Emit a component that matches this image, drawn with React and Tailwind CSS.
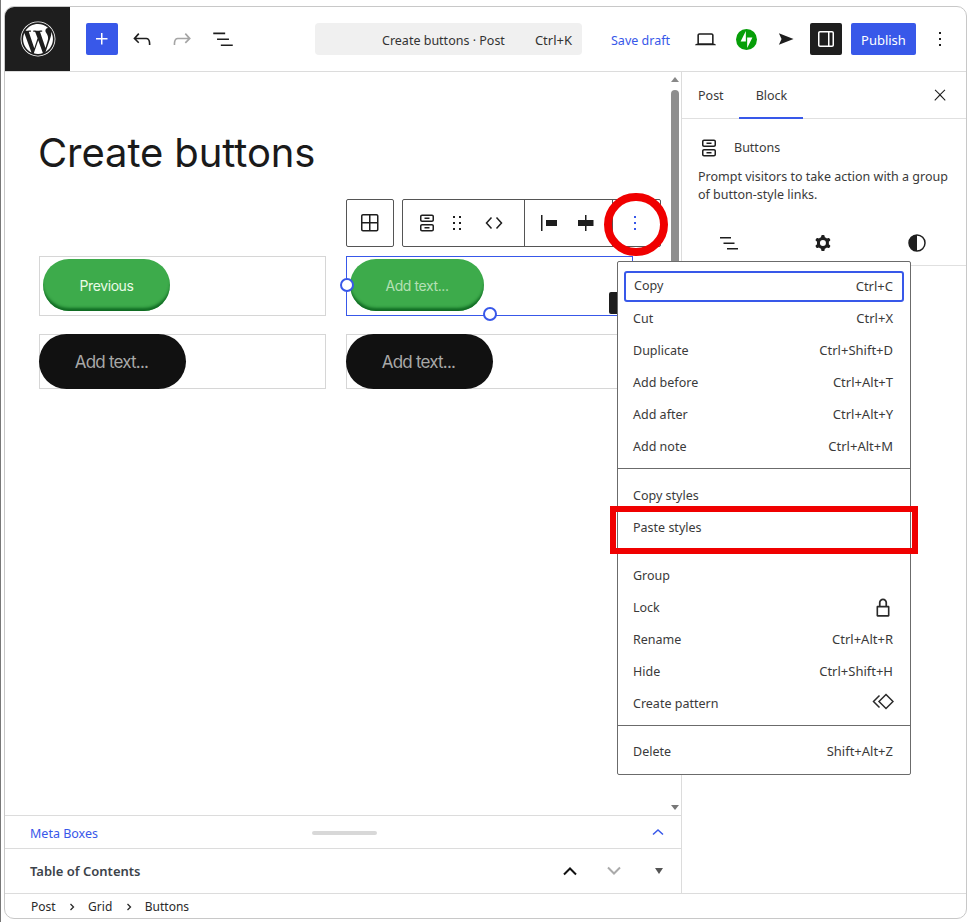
import React from 'react';
import { FaWordpress } from 'react-icons/fa';

const Icon = ({ d, size = 24, className = '', evenOdd = false }) => (
  <svg width={size} height={size} viewBox="0 0 24 24" fill="currentColor" className={`shrink-0 ${className}`}>
    <path d={d} fillRule={evenOdd ? 'evenodd' : 'nonzero'} clipRule={evenOdd ? 'evenodd' : 'nonzero'} />
  </svg>
);

const paths = {
  plus: 'M11 12.5V17.5H12.5V12.5H17.5V11H12.5V6H11V11H6V12.5H11Z',
  undo: 'M18.3 11.7c-.6-.6-1.4-.9-2.3-.9H6.7l2.9-3.3-1.1-1-4.5 5L8.5 16l1-1-2.7-2.7H16c.5 0 .9.2 1.3.5 1 1 1 3.4 1 4.5v.3h1.5v-.2c0-1.5 0-4.3-1.5-5.7z',
  redo: 'M15.6 6.5l-1.1 1 2.9 3.3H8c-.9 0-1.7.3-2.3.9-1.4 1.5-1.4 4.2-1.4 5.6v.2h1.5v-.3c0-1.1 0-3.5 1-4.5.3-.3.7-.5 1.3-.5h9.2L14.5 15l1.1 1.1 4.6-4.6-4.6-5z',
  list: 'M3 6h11v1.5H3V6zm3.5 5.5h11V13h-11v-1.5zM21 17H10v1.5h11V17z',
  laptop: 'M20.5 16h-.7V8c0-1.1-.9-2-2-2H6.2c-1.1 0-2 .9-2 2v8h-.7c-.8 0-1.5.7-1.5 1.5h20c0-.8-.7-1.5-1.5-1.5zM5.7 8c0-.3.2-.5.5-.5h11.6c.3 0 .5.2.5.5v7.6H5.7V8z',
  sidebar: 'M18 4H6c-1.1 0-2 .9-2 2v12c0 1.1.9 2 2 2h12c1.1 0 2-.9 2-2V6c0-1.1-.9-2-2-2zm-4 14.5H6c-.3 0-.5-.2-.5-.5V6c0-.3.2-.5.5-.5h8v13zm4.5-.5c0 .3-.2.5-.5.5h-2.5v-13H18c.3 0 .5.2.5.5v12z',
  dots: 'M13 19h-2v-2h2v2zm0-6h-2v-2h2v2zm0-6h-2V5h2v2z',
  close: 'M13 11.8l6.1-6.3-1-1-6.1 6.2-6.1-6.2-1 1 6.1 6.3-6.5 6.7 1 1 6.5-6.6 6.5 6.6 1-1z',
  buttons: 'M14.5 17.5H9.5V16H14.5V17.5Z M14.5 8H9.5V6.5H14.5V8Z M7 3.5H17C18.1 3.5 19 4.4 19 5.5V9C19 10.1 18.1 11 17 11H7C5.9 11 5 10.1 5 9V5.5C5 4.4 5.9 3.5 7 3.5ZM17 5H7C6.72 5 6.5 5.22 6.5 5.5V9C6.5 9.28 6.72 9.5 7 9.5H17C17.28 9.5 17.5 9.28 17.5 9V5.5C17.5 5.22 17.28 5 17 5Z M7 13H17C18.1 13 19 13.9 19 15V18.5C19 19.6 18.1 20.5 17 20.5H7C5.9 20.5 5 19.6 5 18.5V15C5 13.9 5.9 13 7 13ZM17 14.5H7C6.72 14.5 6.5 14.72 6.5 15V18.5C6.5 18.78 6.72 19 7 19H17C17.28 19 17.5 18.78 17.5 18.5V15C17.5 14.72 17.28 14.5 17 14.5Z',
  drag: 'M8 7h2V5H8v2zm0 6h2v-2H8v2zm0 6h2v-2H8v2zm6-14v2h2V5h-2zm0 8h2v-2h-2v2zm0 6h2v-2h-2v2z',
  grid: 'm3 5c0-1.1.9-2 2-2h13.5c1.1 0 2 .9 2 2v13.5c0 1.1-.9 2-2 2h-13.5c-1.1 0-2-.9-2-2zm2-.5h6v6.5h-6.5v-6c0-.28.22-.5.5-.5zm-.5 8v6c0 .28.22.5.5.5h6v-6.5zm8 0v6.5h6c.28 0 .5-.22.5-.5v-6zm0-8v6.5h6.5v-6c0-.28-.22-.5-.5-.5z',
  justifyLeft: 'M9 9v6h11V9H9zM4 20h1.5V4H4v16z',
  justifyCenter: 'M12.5 15v5H11v-5H4V9h7V4h1.5v5h7v6h-7Z',
  cog: 'M10.289 4.836A1 1 0 0111.275 4h1.306a1 1 0 01.987.836l.244 1.466c.787.26 1.503.679 2.108 1.218l1.393-.522a1 1 0 011.216.437l.653 1.13a1 1 0 01-.23 1.273l-1.148.944a6.025 6.025 0 010 2.435l1.149.946a1 1 0 01.23 1.272l-.653 1.13a1 1 0 01-1.216.437l-1.394-.522c-.605.54-1.32.958-2.108 1.218l-.244 1.466a1 1 0 01-.987.836h-1.306a1 1 0 01-.986-.836l-.244-1.466a5.995 5.995 0 01-2.108-1.218l-1.394.522a1 1 0 01-1.217-.436l-.653-1.131a1 1 0 01.23-1.272l1.149-.946a6.026 6.026 0 010-2.435l-1.148-.944a1 1 0 01-.23-1.272l.653-1.131a1 1 0 011.217-.437l1.393.522a5.994 5.994 0 012.108-1.218l.244-1.466zM14.929 12a3 3 0 11-6 0 3 3 0 016 0z',
  lock: 'M17 10h-1.2V7c0-2.1-1.7-3.8-3.8-3.8-2.1 0-3.8 1.7-3.8 3.8v3H7c-.6 0-1 .4-1 1v8c0 .6.4 1 1 1h10c.6 0 1-.4 1-1v-8c0-.6-.4-1-1-1zM9.8 7c0-1.2 1-2.2 2.2-2.2 1.2 0 2.2 1 2.2 2.2v3H9.8V7zm6.7 11.5h-9v-7h9v7z',
};

const Row = ({ label, hint, icon, className = '' }) => (
  <div className={`flex h-8 items-center justify-between pl-[15px] pr-[17px] ${className}`}>
    <span className="text-[12.5px]">{label}</span>
    {hint && <span>{hint}</span>}
    {icon}
  </div>
);

const Diamonds = () => (
  <svg width="22" height="22" viewBox="0 0 22 22" fill="none" stroke="#2a2a2a" strokeWidth="1.5" className="-mr-[1px] -mt-[4px]">
    <path d="M7.5 4.5 1.5 10.5l6 6" />
    <path d="M14 3.5 21 10.5l-7 7-7-7z" />
  </svg>
);

const Menu = () => (
  <div className="absolute left-[617px] top-[261px] w-[294px] h-[514px] bg-white border border-[#6b6b6b] rounded-[2px] text-[13px] text-[#3a3a3a]">
    <div className="pt-[9px] pl-[6px] pr-[6px]">
      <div className="flex h-[31px] items-center justify-between border-2 border-[#3858e9] rounded-[3px] pl-[8px] pr-[9px]">
        <span className="text-[12.5px]">Copy</span>
        <span>Ctrl+C</span>
      </div>
    </div>
    <div className="mt-[1px]">
      <Row label="Cut" hint="Ctrl+X" />
      <Row label="Duplicate" hint="Ctrl+Shift+D" />
      <Row label="Add before" hint="Ctrl+Alt+T" />
      <Row label="Add after" hint="Ctrl+Alt+Y" />
      <Row label="Add note" hint="Ctrl+Alt+M" />
    </div>
    <div className="mt-[5px] border-t border-[#6b6b6b] pt-[11px]">
      <Row label="Copy styles" />
      <Row label="Paste styles" />
    </div>
    <div className="mt-[6px] border-t border-[#6b6b6b] pt-[9px]">
      <Row label="Group" />
      <Row label="Lock" icon={<Icon d={paths.lock} size={26} className="text-[#2a2a2a] -mr-[3px]" />} />
      <Row label="Rename" hint="Ctrl+Alt+R" />
      <Row label="Hide" hint="Ctrl+Shift+H" />
      <Row label="Create pattern" icon={<Diamonds />} />
    </div>
    <div className="mt-[5px] border-t border-[#6b6b6b] pt-[10px]">
      <Row label="Delete" hint="Shift+Alt+Z" />
    </div>
  </div>
);

const Header = () => (
  <div className="flex h-[65px] shrink-0 items-center border-b border-[#dcdcdc] text-[13px]">
    <div className="flex h-[64px] w-[65px] shrink-0 items-center justify-center bg-[#1e1e1e] rounded-tl-[9px] text-white">
      <FaWordpress size={36} />
    </div>
    <div className="ml-[16px] flex h-8 w-8 items-center justify-center rounded-[2px] bg-[#3858e9] text-white">
      <Icon d={paths.plus} />
    </div>
    <Icon d={paths.undo} className="ml-[11px] text-[#1e1e1e]" size={26} />
    <Icon d={paths.redo} className="ml-[14px] text-[#a5a5a5]" size={26} />
    <Icon d={paths.list} className="ml-[15px] text-[#1e1e1e]" size={26} />
    <div className="ml-[79px] flex h-8 w-[267px] items-center rounded-[4px] bg-[#f0f0f0] pl-[67px] pt-[4px] text-[#333]">
      <span className="whitespace-nowrap text-[12.5px]">Create buttons · Post</span>
      <span className="ml-[30px]">Ctrl+K</span>
    </div>
    <span className="ml-[29px] pt-[4px] text-[12.5px] text-[#3858e9]">Save draft</span>
    <Icon d={paths.laptop} className="ml-[23px] text-[#1e1e1e]" size={25} />
    <svg width="21" height="21" viewBox="0 0 32 32" className="ml-[18px] shrink-0">
      <circle cx="16" cy="16" r="16" fill="#069e08" />
      <path d="M15 19H7l8-16v16zM17 29V13h8l-8 16z" fill="#fff" />
    </svg>
    <svg width="16" height="14" viewBox="0 0 18 14" className="ml-[21px] shrink-0">
      <path d="M1 0.5 17.5 7 1 13.5 4 7z" fill="#1e1e1e" />
    </svg>
    <div className="ml-[16px] flex h-8 w-8 items-center justify-center rounded-[2px] bg-[#1e1e1e] text-white">
      <Icon d={paths.sidebar} />
    </div>
    <div className="ml-[9px] flex h-8 w-[65px] items-center justify-center rounded-[2px] bg-[#3858e9] pt-[4px] text-white">Publish</div>
    <Icon d={paths.dots} className="ml-[12px] text-[#1e1e1e]" />
  </div>
);

const AddText = () => (
  <div className="flex h-[55px] w-[147px] items-center justify-center rounded-full bg-[#111] pr-[2px] pt-[2px] text-[17px] text-[#a8a8a8] tracking-[-0.8px] font-['Inter',sans-serif]">
    Add text...
  </div>
);

const GreenButton = ({ children, className = '' }) => (
  <div className={`ml-[3px] mt-[2px] flex h-[52px] items-center justify-center rounded-full bg-[#3dab4b] shadow-[inset_0_-4px_3px_-1px_#0f6a22] text-[14px] tracking-[-0.4px] font-['Inter',sans-serif] ${className}`}>
    {children}
  </div>
);

const BlockToolbar = () => (
  <div className="mt-[22px] flex h-[48px] text-[#1e1e1e]">
    <div className="flex w-[48px] items-center justify-center rounded-[2px] border border-[#555]">
      <Icon d={paths.grid} evenOdd />
    </div>
    <div className="ml-[8px] flex rounded-[2px] border border-[#555]">
      <div className="flex w-[121px] items-center pl-[12px] gap-[6px]">
        <Icon d={paths.buttons} evenOdd />
        <Icon d={paths.drag} size={24} />
        <svg width="24" height="24" viewBox="0 0 24 24" fill="none" stroke="currentColor" strokeWidth="1.5" className="ml-[7px]">
          <path d="M9.5 6.5 4.5 12l5 5.5M14.5 6.5l5 5.5-5 5.5" />
        </svg>
      </div>
      <div className="flex w-[88px] items-center gap-[13px] border-l border-[#555] pl-[12px]">
        <Icon d={paths.justifyLeft} />
        <Icon d={paths.justifyCenter} />
      </div>
      <div className="flex w-[48px] items-center justify-center border-l border-[#555] pr-[4px] text-[#3858e9]">
        <Icon d={paths.dots} />
      </div>
    </div>
  </div>
);

const Canvas = () => (
  <div className="relative flex-1 overflow-hidden pl-[34px]">
    <h1 className="-ml-[1px] mt-[57px] h-[48px] text-[40px] leading-[48px] tracking-[-0.1px] text-[#1a1a1a] font-['Inter',sans-serif]">Create buttons</h1>
    <div className="ml-[307px]">
      <BlockToolbar />
    </div>
    <div className="mt-[9px] grid w-[594px] grid-cols-[287px_287px] gap-x-[20px] gap-y-[18px]">
      <div className="h-[60px] border border-[#d6d6d6]">
        <GreenButton className="w-[127px] text-[#eafbe6]">Previous</GreenButton>
      </div>
      <div className="h-[60px] border border-[#3858e9]">
        <GreenButton className="w-[134px] text-[#b5e0b5]">Add text...</GreenButton>
      </div>
      <div className="h-[55px] border border-[#d6d6d6]"><div className="-ml-px -mt-px"><AddText /></div></div>
      <div className="h-[55px] border border-[#d6d6d6]"><div className="-ml-px -mt-px"><AddText /></div></div>
    </div>
    {/* scrollbar */}
    <div className="absolute right-0 top-0 bottom-0 w-[12px]">
      <div className="absolute left-[2px] top-[5px] h-0 w-0 border-x-[4px] border-b-[5px] border-x-transparent border-b-[#888]" />
      <div className="absolute left-[2px] top-[18px] h-[300px] w-[8px] rounded-full bg-[#8e8e8e]" />
      <div className="absolute left-[2px] bottom-[5px] h-0 w-0 border-x-[4px] border-t-[5px] border-x-transparent border-t-[#777]" />
    </div>
  </div>
);

const Sidebar = () => (
  <div className="w-[285px] shrink-0 border-l border-[#dcdcdc] text-[12.5px] text-[#3a3a3a]">
    <div className="flex h-[47px] items-center border-b border-[#e0e0e0] pl-[16px] pr-[14px]">
      <span className="pt-[2px]">Post</span>
      <span className="relative ml-[32px] flex h-[46px] items-center pt-[2px]">
        Block
        <span className="absolute -left-[17px] -right-[16px] bottom-[-1px] h-[2px] bg-[#3858e9]" />
      </span>
      <Icon d={paths.close} size={18} className="ml-auto mr-[3px] text-[#1e1e1e]" />
    </div>
    <div className="flex h-[41px] items-center pl-[16px] pt-[16px]">
      <Icon d={paths.buttons} evenOdd className="-ml-[1px] text-[#1e1e1e]" />
      <span className="ml-[13px] pt-[2px]">Buttons</span>
    </div>
    <p className="mt-[8px] pl-[16px] leading-[18px] whitespace-nowrap">
      Prompt visitors to take action with a group
      <br />
      of button-style links.
    </p>
    <div className="mt-[16px] flex h-[46px] items-center justify-between border-b border-[#e0e0e0] pl-[35px] pr-[40px] text-[#1e1e1e]">
      <Icon d={paths.list} />
      <Icon d={paths.cog} evenOdd className="-ml-[3px]" />
      <svg width="18" height="18" viewBox="0 0 18 18">
        <circle cx="9" cy="9" r="8" fill="#fff" stroke="#1e1e1e" strokeWidth="1.5" />
        <path d="M9 1a8 8 0 0 0 0 16z" fill="#1e1e1e" />
      </svg>
    </div>
  </div>
);

const Crumb = () => (
  <svg width="6" height="8" viewBox="0 0 6 8" fill="none" stroke="currentColor" strokeWidth="1.3"><path d="M1.5 1 4.5 4l-3 3" /></svg>
);

export default function App() {
  return (
    <div className="relative h-[922px] w-[970px] overflow-hidden border-l border-[#777] bg-white pb-[3px] pl-[3px] pr-[3px] pt-[6px] font-['Noto_Sans',sans-serif]">
      <div className="flex h-full flex-col rounded-[10px] border border-[#c8c8c8]">
        <Header />
        <div className="flex min-h-0 flex-1">
          <div className="flex min-w-0 flex-1 flex-col">
            <Canvas />
            <div className="flex h-[33px] shrink-0 items-center justify-between border-t border-[#dcdcdc] pl-[25px] pr-[16px] text-[12.5px] text-[#3858e9]">
              <span className="pt-[4px]">Meta Boxes</span>
              <span className="mr-[60px] mt-[1px] h-[4px] w-[65px] rounded-full bg-[#d8d8d8]" />
              <svg width="14" height="10" viewBox="0 0 14 10" fill="none" stroke="currentColor" strokeWidth="1.5"><path d="M2 7.5 7 3l5 4.5" /></svg>
            </div>
            <div className="flex h-[45px] shrink-0 items-center border-t border-[#dcdcdc] pl-[25px] pr-[18px] text-[13px] font-semibold text-[#3c434a]">
              <span className="pt-[2px]">Table of Contents</span>
              <svg width="16" height="12" viewBox="0 0 16 12" fill="none" stroke="#111" strokeWidth="2" className="ml-auto"><path d="M2 9.5 8 3.5l6 6" /></svg>
              <svg width="16" height="12" viewBox="0 0 16 12" fill="none" stroke="#aaa" strokeWidth="2" className="ml-[28px]"><path d="M2 2.5l6 6 6-6" /></svg>
              <span className="ml-[33px] h-0 w-0 border-x-[4px] border-t-[6px] border-x-transparent border-t-[#555]" />
            </div>
          </div>
          <Sidebar />
        </div>
        <div className="flex h-[25px] shrink-0 items-center gap-[13.25px] border-t border-[#dcdcdc] pl-[26px] pt-[2px] text-[12px] text-[#2a2a2a]">
          <span>Post</span>
          <Crumb />
          <span>Grid</span>
          <Crumb />
          <span>Buttons</span>
        </div>
      </div>

      {/* overlays above the editor */}
      <span className="absolute left-[339px] top-[278px] h-[14px] w-[14px] rounded-full border-2 border-[#3858e9] bg-white" />
      <span className="absolute left-[482px] top-[307px] h-[14px] w-[14px] rounded-full border-2 border-[#3858e9] bg-white" />
      <span className="absolute left-[608px] top-[292px] h-[22px] w-[10px] rounded-[2px] bg-[#1e1e1e]" />
      <div className="absolute left-[-1px] top-0"><div className="relative"><Menu /></div></div>
      <span className="absolute left-[603px] top-[193px] h-[63px] w-[64px] rounded-full border-[8px] border-[#f00000]" />
      <span className="absolute left-[609px] top-[506px] h-[48px] w-[308px] border-[6px] border-[#f00000]" />
    </div>
  );
}
